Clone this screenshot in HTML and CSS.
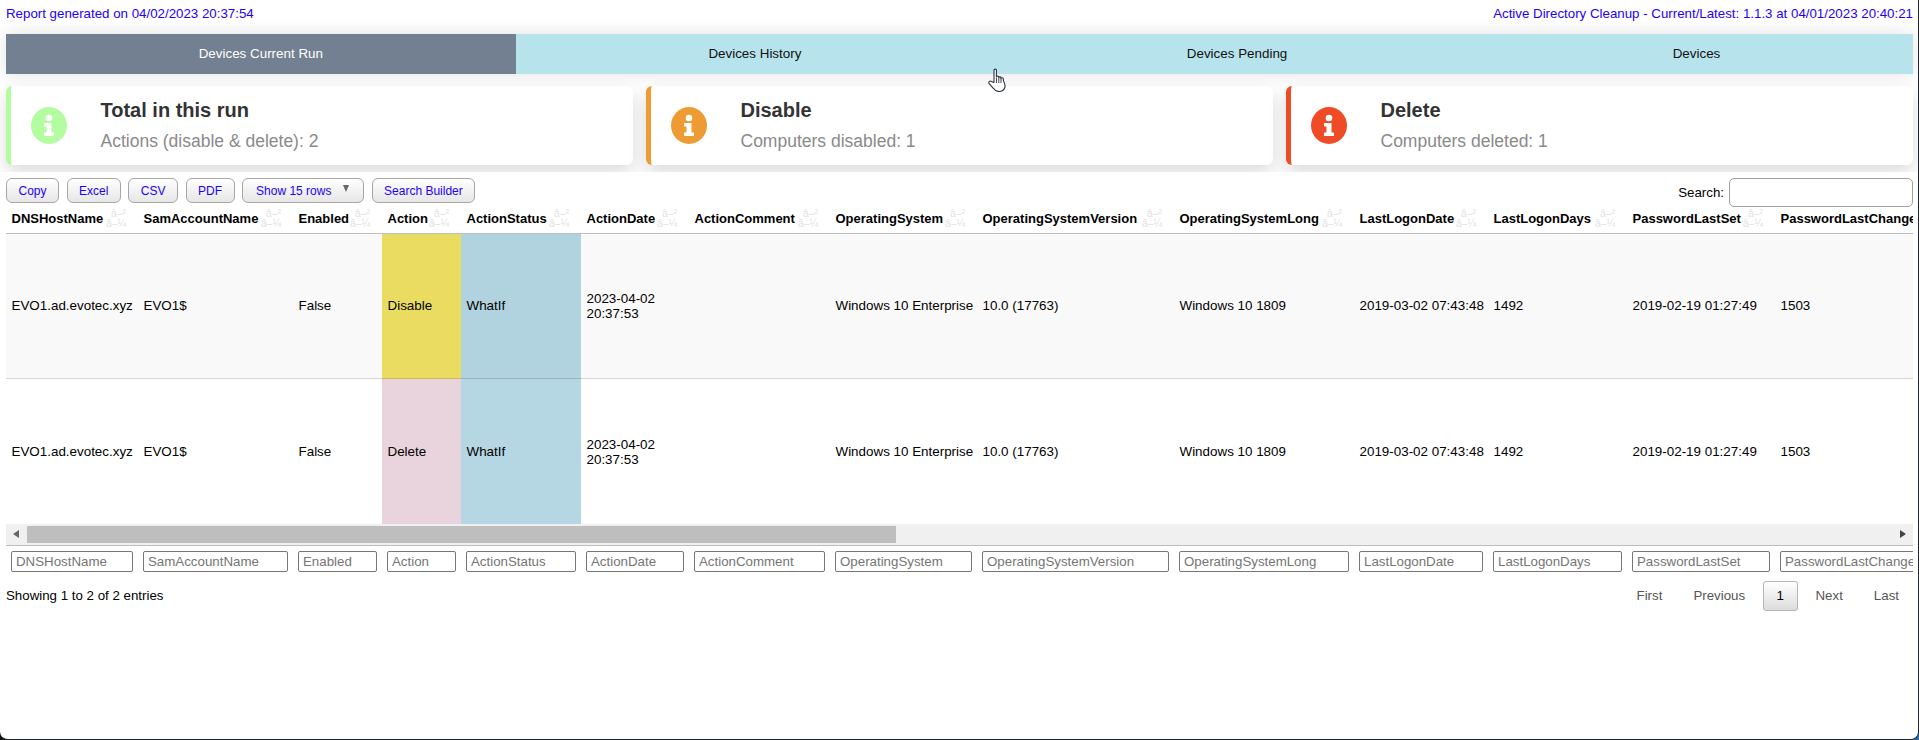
FILE: index.html
```html
<!DOCTYPE html>
<html lang="en">
<head>
<meta charset="utf-8">
<title>Active Directory Cleanup</title>
<link rel="stylesheet" href="styles.css">
</head>
<body>
<div class="frame">
  <header class="topbar">
    <span>Report generated on 04/02/2023 20:37:54</span>
    <span>Active Directory Cleanup - Current/Latest: 1.1.3 at 04/01/2023 20:40:21</span>
  </header>
  <nav class="tabs">
    <div class="tab active">Devices Current Run</div>
    <div class="tab">Devices History</div>
    <div class="tab">Devices Pending</div>
    <div class="tab">Devices</div>
  </nav>
  <section class="cards">
    <div class="card green">
      <svg class="info" viewBox="0 0 36 37"><ellipse class="disc" cx="18" cy="18.5" rx="18" ry="18.5"/><circle class="mark" cx="18" cy="11" r="3.3"/><path class="mark" d="M13 16h7.5v9.5H23V29H13v-3.5h2.5V19.5H13z"/></svg>
      <div class="card-text"><div class="card-title">Total in this run</div><div class="card-sub">Actions (disable &amp; delete): 2</div></div>
    </div>
    <div class="card orange">
      <svg class="info" viewBox="0 0 36 37"><ellipse class="disc" cx="18" cy="18.5" rx="18" ry="18.5"/><circle class="mark" cx="18" cy="11" r="3.3"/><path class="mark" d="M13 16h7.5v9.5H23V29H13v-3.5h2.5V19.5H13z"/></svg>
      <div class="card-text"><div class="card-title">Disable</div><div class="card-sub">Computers disabled: 1</div></div>
    </div>
    <div class="card red">
      <svg class="info" viewBox="0 0 36 37"><ellipse class="disc" cx="18" cy="18.5" rx="18" ry="18.5"/><circle class="mark" cx="18" cy="11" r="3.3"/><path class="mark" d="M13 16h7.5v9.5H23V29H13v-3.5h2.5V19.5H13z"/></svg>
      <div class="card-text"><div class="card-title">Delete</div><div class="card-sub">Computers deleted: 1</div></div>
    </div>
  </section>
  <main class="content">
    <div class="toolbar">
      <div class="buttons">
        <button class="btn">Copy</button>
        <button class="btn">Excel</button>
        <button class="btn">CSV</button>
        <button class="btn">PDF</button>
        <button class="btn btn-drop">Show 15 rows<span class="caret"></span></button>
        <button class="btn">Search Builder</button>
      </div>
      <label class="search">Search:<input class="search-input" type="text"></label>
    </div>
    <div class="table-clip">
      <table class="grid">
        <colgroup>
          <col class="c1"><col class="c2"><col class="c3"><col class="c4"><col class="c5"><col class="c6"><col class="c7"><col class="c8"><col class="c9"><col class="c10"><col class="c11"><col class="c12"><col class="c13"><col class="c14">
        </colgroup>
        <thead>
          <tr>
            <th>DNSHostName<span class="sort">â–²<br>â–¼</span></th>
            <th>SamAccountName<span class="sort">â–²<br>â–¼</span></th>
            <th>Enabled<span class="sort">â–²<br>â–¼</span></th>
            <th>Action<span class="sort">â–²<br>â–¼</span></th>
            <th>ActionStatus<span class="sort">â–²<br>â–¼</span></th>
            <th>ActionDate<span class="sort">â–²<br>â–¼</span></th>
            <th>ActionComment<span class="sort">â–²<br>â–¼</span></th>
            <th>OperatingSystem<span class="sort">â–²<br>â–¼</span></th>
            <th>OperatingSystemVersion<span class="sort">â–²<br>â–¼</span></th>
            <th>OperatingSystemLong<span class="sort">â–²<br>â–¼</span></th>
            <th>LastLogonDate<span class="sort">â–²<br>â–¼</span></th>
            <th>LastLogonDays<span class="sort">â–²<br>â–¼</span></th>
            <th>PasswordLastSet<span class="sort">â–²<br>â–¼</span></th>
            <th>PasswordLastChangedDays</th>
          </tr>
        </thead>
        <tbody>
          <tr class="odd">
            <td>EVO1.ad.evotec.xyz</td><td>EVO1$</td><td>False</td><td class="yellow">Disable</td><td class="blue1">WhatIf</td><td class="wrap">2023-04-02 20:37:53</td><td></td><td>Windows 10 Enterprise</td><td>10.0 (17763)</td><td>Windows 10 1809</td><td>2019-03-02 07:43:48</td><td>1492</td><td>2019-02-19 01:27:49</td><td>1503</td>
          </tr>
          <tr>
            <td>EVO1.ad.evotec.xyz</td><td>EVO1$</td><td>False</td><td class="pink">Delete</td><td class="blue2">WhatIf</td><td class="wrap">2023-04-02 20:37:53</td><td></td><td>Windows 10 Enterprise</td><td>10.0 (17763)</td><td>Windows 10 1809</td><td>2019-03-02 07:43:48</td><td>1492</td><td>2019-02-19 01:27:49</td><td>1503</td>
          </tr>
        </tbody>
      </table>
    </div>
    <div class="scrollbar">
      <span class="arrow arrow-left"></span>
      <div class="track"><div class="thumb"></div></div>
      <span class="arrow arrow-right"></span>
    </div>
    <div class="table-clip foot-clip">
      <table class="grid foot">
        <colgroup>
          <col class="c1"><col class="c2"><col class="c3"><col class="c4"><col class="c5"><col class="c6"><col class="c7"><col class="c8"><col class="c9"><col class="c10"><col class="c11"><col class="c12"><col class="c13"><col class="c14">
        </colgroup>
        <tr>
          <td><input class="filter" placeholder="DNSHostName"></td>
          <td><input class="filter" placeholder="SamAccountName"></td>
          <td><input class="filter" placeholder="Enabled"></td>
          <td><input class="filter" placeholder="Action"></td>
          <td><input class="filter" placeholder="ActionStatus"></td>
          <td><input class="filter" placeholder="ActionDate"></td>
          <td><input class="filter" placeholder="ActionComment"></td>
          <td><input class="filter" placeholder="OperatingSystem"></td>
          <td><input class="filter" placeholder="OperatingSystemVersion"></td>
          <td><input class="filter" placeholder="OperatingSystemLong"></td>
          <td><input class="filter" placeholder="LastLogonDate"></td>
          <td><input class="filter" placeholder="LastLogonDays"></td>
          <td><input class="filter" placeholder="PasswordLastSet"></td>
          <td><input class="filter" placeholder="PasswordLastChangedDays"></td>
        </tr>
      </table>
    </div>
    <div class="info-row">
      <div class="entries">Showing 1 to 2 of 2 entries</div>
      <div class="pager">
        <a class="page">First</a>
        <a class="page">Previous</a>
        <a class="page current">1</a>
        <a class="page">Next</a>
        <a class="page">Last</a>
      </div>
    </div>
  </main>
  <svg class="cursor" viewBox="0 0 19 24"><path d="M6 14.5V2.2C6 .7 8.4.7 8.4 2.2V9c0-1.3 2.3-1.3 2.3 0v.8c0-1.2 2.3-1.2 2.3 0v.8c0-1.2 2.3-1.1 2.3.2v1.2c0 1.2 2.6 5 1.6 7.5-.9 2.4-2.6 4-5.8 4-2.8 0-4.300-1-5.800-3.200L1 15.300c-.9-1.600 1-3 2.400-1.800z" fill="#fff" stroke="#2b3042" stroke-width="1.100" stroke-linejoin="round"/><path d="M8.500 10v5M10.800 10v5M13 10.500V15" fill="none" stroke="#2b3042" stroke-width=".9"/></svg>
</div>
</body>
</html>
```
FILE: styles.css
```css
* { box-sizing: border-box; }
html, body { margin: 0; height: 100%; overflow: hidden; }
body {
  font-family: "Liberation Sans", Arial, sans-serif;
  font-size: 13.4px;
  color: #000;
  background: linear-gradient(to right, #111 50%, #2b6cb0 50%);
}
.frame {
  position: relative;
  width: 1919px;
  height: 740px;
  padding: 0 5px 0 6px;
  overflow: hidden;
  background: #fff;
  border-right: 1px solid #20242c;
  border-bottom: 1px solid #20242c;
  border-radius: 0 0 8px 8px;
}
.topbar { display: flex; justify-content: space-between; height: 34px; padding-top: 5px; line-height: 17px; color: #2200ff; font-size: 13.3px; }
.tabs {
  position: relative;
  display: flex;
  height: 40px;
  background: #b7e3ec;
  box-shadow: 0 0 18px rgba(0,0,0,.12);
}
.tab { flex: 1 1 auto; text-align: center; line-height: 40px; font-size: 13.4px; color: #111; }
.tab.active { background: #738091; color: #fff; }
.cards { display: flex; gap: 13px; margin-top: 12px; height: 79px; }
.card {
  position: relative;
  flex: 1 1 0;
  display: flex;
  align-items: center;
  padding-left: 20px;
  background: #fff;
  border-left: 5px solid;
  border-radius: 6px;
  box-shadow: 0 8px 18px rgba(0,0,0,.14);
}
.green { border-color: #b3fda0; }
.orange { border-color: #ee9b33; }
.red { border-color: #ee4b26; }
.info { width: 36px; height: 37px; flex: none; }
.green .disc { fill: #b3fda0; }
.orange .disc { fill: #ee9b33; }
.red .disc { fill: #ee4b26; }
.mark { fill: #fff; }
.card-text { margin-left: 33.5px; margin-top: -1px; }
.card-title { font-size: 20px; font-weight: 700; color: #333; line-height: 24px; }
.card-sub { margin-top: 8px; font-size: 17.5px; color: #8a8a8a; line-height: 22px; }
.content { position: relative; margin: 7px -5px 0 -6px; padding: 6px 5px 0 6px; background: #fff; }
.toolbar { display: flex; justify-content: space-between; height: 26px; }
.buttons { display: flex; gap: 7.5px; height: 25px; }
.btn {
  height: 25px;
  padding: 0 11.5px;
  border: 1px solid #a6a6a6;
  border-radius: 6px;
  background: linear-gradient(#fff, #e6e6e6);
  color: #2200ff;
  font: 12px "Liberation Sans", Arial, sans-serif;
}
.btn-drop { position: relative; width: 122px; padding: 0 33px 0 13px; white-space: nowrap; text-align: left; }
.caret { position: absolute; right: 14px; top: 6px; width: 0; height: 0; border: 3.5px solid transparent; border-top: 7px solid #666; border-bottom: 0; }
.search { display: flex; align-items: center; gap: 5px; height: 29px; font-size: 13.3px; }
.search-input { width: 184px; height: 29px; border: 1px solid #a0a0a0; border-radius: 5px; background: #fff; }
.table-clip { overflow: hidden; }
.grid { table-layout: fixed; width: 2100px; border-collapse: collapse; }
.c1 { width: 132px; } .c2 { width: 155px; } .c3 { width: 89px; } .c4 { width: 79px; } .c5 { width: 120px; }
.c6 { width: 108px; } .c7 { width: 141px; } .c8 { width: 147px; } .c9 { width: 197px; } .c10 { width: 180px; }
.c11 { width: 134px; } .c12 { width: 139px; } .c13 { width: 148px; } .c14 { width: 331px; }
.grid th { position: relative; height: 29px; padding: 0 5.5px; text-align: left; font-size: 13px; white-space: nowrap; border-bottom: 1px solid #bdbdbd; overflow: hidden; }
.sort { position: absolute; right: 12px; top: 5px; font-size: 10.3px; font-weight: 400; line-height: 10px; color: #e2e2e2; text-align: right; }
.grid td { height: 145.5px; padding: 0 5.5px; font-size: 13.4px; line-height: 15px; vertical-align: middle; white-space: nowrap; }
.grid td.wrap { white-space: normal; }
.grid tbody tr + tr td { border-top: 1px solid rgba(0,0,0,.14); }
.odd td { background: #f9f9f9; }
.grid td.yellow { background: #e9dc60; }
.grid td.blue1 { background: #b1d2df; }
.grid td.pink { background: #e9d3dc; }
.grid td.blue2 { background: #b5d6e3; }
.scrollbar { display: flex; height: 22px; background: #f0f0f0; border-bottom: 1px solid #bdbdbd; }
.arrow { position: relative; width: 21px; flex: none; }
.arrow::after { content: ""; position: absolute; top: 6px; border: 4.5px solid transparent; }
.arrow-left::after { left: 7px; border-left: 0; border-right: 6px solid #666; }
.arrow-right::after { right: 7px; border-right: 0; border-left: 6px solid #444; }
.track { flex: 1; padding: 2px 0; }
.thumb { width: 869px; height: 100%; background: #bebebe; }
.foot td { height: 39px; padding: 5px 5px 12px; vertical-align: top; }
.filter { display: block; width: 100%; height: 21px; padding: 0 4px; border: 1px solid #767676; border-radius: 2px; font: 13.3px "Liberation Sans", Arial, sans-serif; }
.filter::placeholder { color: #757575; opacity: 1; }
.info-row { display: flex; justify-content: space-between; align-items: flex-start; margin-top: -4px; }
.entries { padding-top: 6px; line-height: 17px; font-size: 13.3px; }
.pager { display: flex; align-items: center; height: 30px; margin-right: -1.5px; }
.page { padding: 0 15.5px; color: #555; font-size: 13.3px; line-height: 28px; border: 1px solid transparent; margin: 0 -1px; }
.page.current { margin: 0 2px; padding: 0 13px; color: #000; border: 1px solid #b5b5b5; border-radius: 3px; background: linear-gradient(#fff, #dcdcdc); }
.cursor { position: absolute; left: 988px; top: 68px; width: 19px; height: 24px; }
```
